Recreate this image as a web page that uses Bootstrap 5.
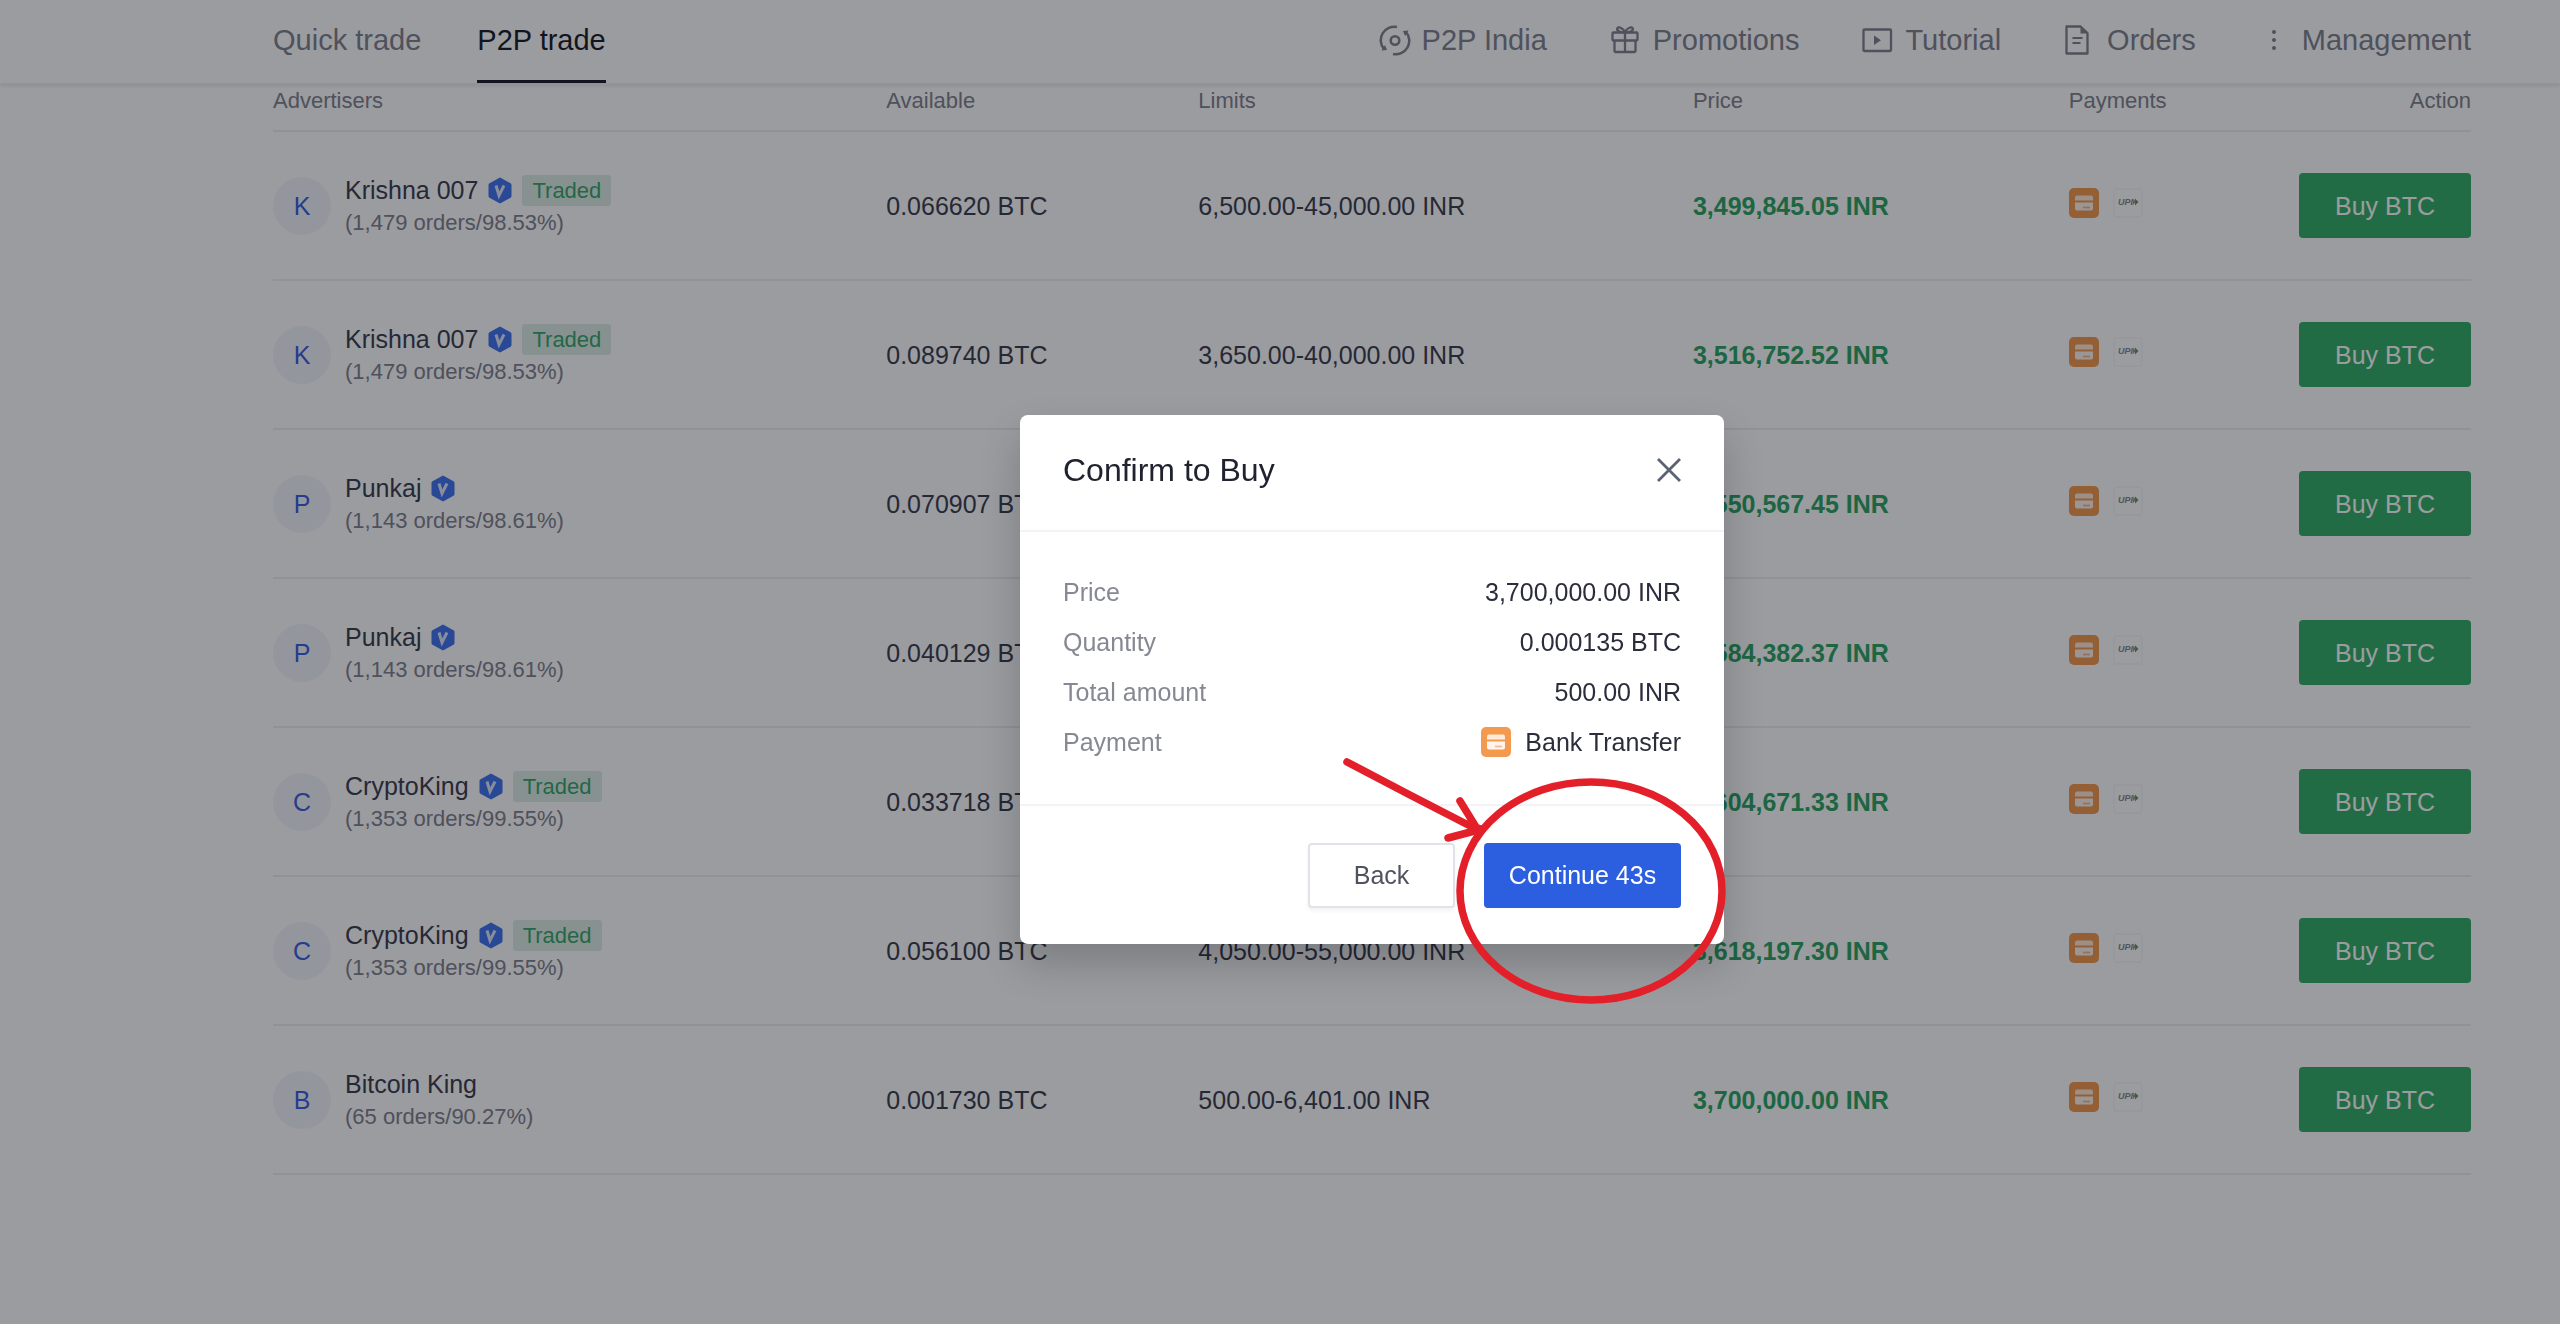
<!DOCTYPE html>
<html lang="en">
<head>
<meta charset="utf-8">
<meta name="viewport" content="width=device-width, initial-scale=1">
<title>P2P trade</title>
<link href="https://cdn.jsdelivr.net/npm/bootstrap@5.3.0/dist/css/bootstrap.min.css" rel="stylesheet">
<style>
:root{--ink:#3c3e50;--muted:#80828f;--green:#2fa565;--line:#edeef1;--edge-l:273px;--edge-r:89px}
body{font-family:"Liberation Sans",Arial,sans-serif;font-size:25px;line-height:34px;color:var(--ink);background:#fff;min-height:100vh;overflow:hidden}
a{text-decoration:none;color:inherit}
.edges{padding-left:var(--edge-l);padding-right:var(--edge-r)}
.topbar{height:83px;font-size:29px;color:var(--muted);background:#fff;box-shadow:0 4px 2px rgba(10,15,40,.06)}
.tabs{gap:56px}
.tabs a{padding:23px 0;border-bottom:3px solid transparent}
.tabs a.current{color:#1c1f2c;border-bottom-color:#1c1f2c}
.tools{gap:63px;padding-bottom:3px}
.tools a{gap:11px}
.tools svg{width:32px;height:32px}
.offers{table-layout:fixed;width:100%}
.offers th{height:48px;padding:0 0 16px;font-size:22px;line-height:26px;font-weight:400;color:var(--muted);vertical-align:bottom;border-bottom:2px solid var(--line)}
.offers td{height:149px;padding:0;vertical-align:middle;border-bottom:2px solid var(--line)}
.w-adv{width:27.9%}.w-avl{width:14.2%}.w-lim{width:22.5%}.w-prc{width:17.1%}
.who{gap:14px}
.face{width:58px;height:58px;border-radius:50%;background:#f4f6fe;color:#3c5fe0}
.nick{gap:10px}
.vip{width:24px;height:27px}
.tag-traded{font-size:22px;line-height:31px;padding:0 10px;border-radius:3px;color:#3aa76d;background:#deefe6}
.stats{font-size:22px;line-height:31px;color:var(--muted)}
.cost{font-weight:700;color:var(--green)}
.pays{gap:14px;padding-bottom:5px}
.pays svg,.bank{width:30px;height:30px}
.btn{--bs-btn-font-size:25px;--bs-btn-line-height:34px;--bs-btn-border-radius:4px;height:65px;padding:0}
.btn-buy{--bs-btn-color:#fff;--bs-btn-bg:#35b069;--bs-btn-hover-color:#fff;--bs-btn-hover-bg:#2c9c5b;--bs-btn-border-width:0;width:172px}
.confirm-layer{background:rgba(5,8,15,.4);padding:34px var(--edge-r) 0 var(--edge-l)}
.confirm-box{width:704px;position:relative;color:#2b2d3c}
.confirm-box .modal-content{border:0;border-radius:8px;color:inherit;box-shadow:0 20px 40px rgba(0,0,0,.2)}
.confirm-box .modal-header{height:117px;padding:0 42px 4px 43px;border-bottom:2px solid #f2f3f6}
.confirm-box .modal-title{font-size:32px;line-height:40px;font-weight:400;color:#20222f}
.confirm-box .modal-body{padding:35px 43px 37px;line-height:50px}
.confirm-box .modal-footer{padding:37px 43px 36px;gap:29px;border-top:2px solid #f2f3f6}
.confirm-box .modal-footer>*{margin:0}
.confirm-box dt{font-weight:400;color:#868893}
.close-x{width:26px;height:26px;border:0;background:none}
.bank-line{gap:14px}
.btn-back{--bs-btn-color:#50525f;--bs-btn-bg:#fff;--bs-btn-border-color:#e2e3e8;--bs-btn-border-width:2px;width:147px;box-shadow:0 3px 4px rgba(0,0,0,.05)}
.btn-go{--bs-btn-color:#fff;--bs-btn-bg:#2c5fe0;--bs-btn-border-width:0;width:197px}
.callout-ink{position:absolute;left:310px;top:330px;width:420px;height:270px;pointer-events:none}
</style>
</head>
<body>
<svg class="d-none" aria-hidden="true">
  <symbol id="i-vip" viewBox="0 0 24 27"><path d="M12 0.5 22.5 6.2Q23.5 6.8 23.5 8v11q0 1.200-1 1.800L12 26.500 1.500 20.800Q.5 20.200.5 19V8q0-1.200 1-1.800Z" fill="#4273f0"/><path d="m8 8.500 3 10 5-10" fill="none" stroke="#dfe6fb" stroke-width="3"/></symbol>
  <symbol id="i-bank" viewBox="0 0 30 30"><rect width="30" height="30" rx="5" fill="#f39a4f"/><path d="M6 9.500Q6 7.500 8 7.500h14q2 0 2 2V12.500H6Z" fill="#ffe9d8"/><path d="M6 14.500h18v6q0 2-2 2H8q-2 0-2-2Z" fill="#fff5ec"/><path d="M14 19.500h7" stroke="#f6b685" stroke-width="1.600"/></symbol>
  <symbol id="i-upi" viewBox="0 0 30 30"><rect x="1" y="1" width="28" height="28" rx="3" fill="#fff" stroke="#f6f7f8" stroke-width="1.500"/><text x="5" y="17" font-family="Liberation Sans" font-size="9" font-weight="700" font-style="italic" fill="#85878d">UPI</text><path d="m22 10.500 3.500 3.500-3.500 3.500Z" fill="#5c9a6c"/><path d="m20.500 10.500 2.200 3.500-3 3.500Z" fill="#b99458"/></symbol>
</svg>

<header class="topbar edges d-flex justify-content-between position-relative">
  <nav class="tabs d-flex"><a href="#">Quick trade</a><a href="#" class="current" aria-current="page">P2P trade</a></nav>
  <nav class="tools d-flex align-items-center">
    <a href="#" class="d-flex align-items-center"><svg viewBox="0 0 32 32" fill="none" stroke="currentColor" stroke-width="2.500"><circle cx="16" cy="16.500" r="4.300"/><path d="M18 3A13.500 13.500 0 0 0 5 25M14 30A13.500 13.500 0 0 0 27 8"/><path d="m2.500 26.500 5.500-.5-2-5ZM29.500 6.500l-5.500.5 2 5Z" fill="currentColor" stroke="none"/></svg>P2P India</a>
    <a href="#" class="d-flex align-items-center"><svg viewBox="0 0 32 32" fill="none" stroke="currentColor" stroke-width="2.300"><rect x="2.500" y="8.500" width="25" height="8" rx="1"/><path d="M4.500 16.500V27q0 1 1 1h19q1 0 1-1V16.500M15 8.500V28M15 8.500C11 8.500 6.500 7 7.200 4.500 8 2 13 3.500 15 8.500c2-5 7-6.500 7.800-4C23.500 7 19 8.500 15 8.500Z"/></svg>Promotions</a>
    <a href="#" class="d-flex align-items-center"><svg viewBox="0 0 32 32" fill="none" stroke="currentColor" stroke-width="2.300"><rect x="1.500" y="5.500" width="27.500" height="21.500" rx="1"/><path d="M12 11.500 19 16.200l-7 4.700Z" fill="currentColor" stroke="none"/></svg>Tutorial</a>
    <a href="#" class="d-flex align-items-center"><svg viewBox="0 0 32 32" fill="none" stroke="currentColor" stroke-width="2.300"><path d="M2.500 2.500h14L23.500 9v20.500h-21Z" stroke-linejoin="round"/><path d="M16.500 3 23 9.500h-6.500Z" fill="currentColor" stroke="none"/><path d="M8.500 14h10M8.500 19h8" stroke-width="2"/></svg>Orders</a>
    <a href="#" class="d-flex align-items-center"><svg viewBox="0 0 32 32" fill="currentColor"><circle cx="15" cy="8" r="2"/><circle cx="15" cy="16" r="2"/><circle cx="15" cy="24" r="2"/></svg>Management</a>
  </nav>
</header>

<main class="edges">
<table class="offers">
  <thead><tr><th class="w-adv">Advertisers</th><th class="w-avl">Available</th><th class="w-lim">Limits</th><th class="w-prc">Price</th><th>Payments</th><th class="text-end">Action</th></tr></thead>
  <tbody>
  <tr>
    <td><div class="who d-flex align-items-center"><span class="face d-flex align-items-center justify-content-center">K</span><div><div class="nick d-flex align-items-center"><a href="#">Krishna 007</a><svg class="vip"><use href="#i-vip"/></svg><span class="tag-traded">Traded</span></div><div class="stats">(1,479 orders/98.53%)</div></div></div></td>
    <td>0.066620 BTC</td><td>6,500.00-45,000.00 INR</td><td class="cost">3,499,845.05 INR</td>
    <td><div class="pays d-flex"><svg><use href="#i-bank"/></svg><svg><use href="#i-upi"/></svg></div></td>
    <td class="text-end"><button type="button" class="btn btn-buy">Buy BTC</button></td>
  </tr>
  <tr>
    <td><div class="who d-flex align-items-center"><span class="face d-flex align-items-center justify-content-center">K</span><div><div class="nick d-flex align-items-center"><a href="#">Krishna 007</a><svg class="vip"><use href="#i-vip"/></svg><span class="tag-traded">Traded</span></div><div class="stats">(1,479 orders/98.53%)</div></div></div></td>
    <td>0.089740 BTC</td><td>3,650.00-40,000.00 INR</td><td class="cost">3,516,752.52 INR</td>
    <td><div class="pays d-flex"><svg><use href="#i-bank"/></svg><svg><use href="#i-upi"/></svg></div></td>
    <td class="text-end"><button type="button" class="btn btn-buy">Buy BTC</button></td>
  </tr>
  <tr>
    <td><div class="who d-flex align-items-center"><span class="face d-flex align-items-center justify-content-center">P</span><div><div class="nick d-flex align-items-center"><a href="#">Punkaj</a><svg class="vip"><use href="#i-vip"/></svg></div><div class="stats">(1,143 orders/98.61%)</div></div></div></td>
    <td>0.070907 BTC</td><td></td><td class="cost">3,550,567.45 INR</td>
    <td><div class="pays d-flex"><svg><use href="#i-bank"/></svg><svg><use href="#i-upi"/></svg></div></td>
    <td class="text-end"><button type="button" class="btn btn-buy">Buy BTC</button></td>
  </tr>
  <tr>
    <td><div class="who d-flex align-items-center"><span class="face d-flex align-items-center justify-content-center">P</span><div><div class="nick d-flex align-items-center"><a href="#">Punkaj</a><svg class="vip"><use href="#i-vip"/></svg></div><div class="stats">(1,143 orders/98.61%)</div></div></div></td>
    <td>0.040129 BTC</td><td></td><td class="cost">3,584,382.37 INR</td>
    <td><div class="pays d-flex"><svg><use href="#i-bank"/></svg><svg><use href="#i-upi"/></svg></div></td>
    <td class="text-end"><button type="button" class="btn btn-buy">Buy BTC</button></td>
  </tr>
  <tr>
    <td><div class="who d-flex align-items-center"><span class="face d-flex align-items-center justify-content-center">C</span><div><div class="nick d-flex align-items-center"><a href="#">CryptoKing</a><svg class="vip"><use href="#i-vip"/></svg><span class="tag-traded">Traded</span></div><div class="stats">(1,353 orders/99.55%)</div></div></div></td>
    <td>0.033718 BTC</td><td></td><td class="cost">3,604,671.33 INR</td>
    <td><div class="pays d-flex"><svg><use href="#i-bank"/></svg><svg><use href="#i-upi"/></svg></div></td>
    <td class="text-end"><button type="button" class="btn btn-buy">Buy BTC</button></td>
  </tr>
  <tr>
    <td><div class="who d-flex align-items-center"><span class="face d-flex align-items-center justify-content-center">C</span><div><div class="nick d-flex align-items-center"><a href="#">CryptoKing</a><svg class="vip"><use href="#i-vip"/></svg><span class="tag-traded">Traded</span></div><div class="stats">(1,353 orders/99.55%)</div></div></div></td>
    <td>0.056100 BTC</td><td>4,050.00-55,000.00 INR</td><td class="cost">3,618,197.30 INR</td>
    <td><div class="pays d-flex"><svg><use href="#i-bank"/></svg><svg><use href="#i-upi"/></svg></div></td>
    <td class="text-end"><button type="button" class="btn btn-buy">Buy BTC</button></td>
  </tr>
  <tr>
    <td><div class="who d-flex align-items-center"><span class="face d-flex align-items-center justify-content-center">B</span><div><div class="nick d-flex align-items-center"><a href="#">Bitcoin King</a></div><div class="stats">(65 orders/90.27%)</div></div></div></td>
    <td>0.001730 BTC</td><td>500.00-6,401.00 INR</td><td class="cost">3,700,000.00 INR</td>
    <td><div class="pays d-flex"><svg><use href="#i-bank"/></svg><svg><use href="#i-upi"/></svg></div></td>
    <td class="text-end"><button type="button" class="btn btn-buy">Buy BTC</button></td>
  </tr>
  </tbody>
</table>
</main>

<div class="modal confirm-layer d-flex align-items-center justify-content-center" role="dialog" aria-modal="true" aria-labelledby="confirm-title">
  <div class="confirm-box">
    <div class="modal-content">
      <div class="modal-header">
        <h1 class="modal-title" id="confirm-title">Confirm to Buy</h1>
        <button type="button" class="close-x p-0 d-flex" aria-label="Close"><svg viewBox="0 0 26 26" width="26" height="26" fill="none" stroke="#5b6274" stroke-width="2.800"><path d="m2 2 22 22M24 2 2 24"/></svg></button>
      </div>
      <dl class="modal-body m-0">
        <div class="d-flex justify-content-between"><dt>Price</dt><dd class="m-0">3,700,000.00 INR</dd></div>
        <div class="d-flex justify-content-between"><dt>Quantity</dt><dd class="m-0">0.000135 BTC</dd></div>
        <div class="d-flex justify-content-between"><dt>Total amount</dt><dd class="m-0">500.00 INR</dd></div>
        <div class="d-flex justify-content-between"><dt>Payment</dt><dd class="bank-line d-flex align-items-center m-0"><svg class="bank"><use href="#i-bank"/></svg>Bank Transfer</dd></div>
      </dl>
      <div class="modal-footer">
        <button type="button" class="btn btn-back">Back</button>
        <button type="button" class="btn btn-go">Continue 43s</button>
      </div>
    </div>
    <svg class="callout-ink" viewBox="0 0 420 270" fill="none" stroke="#e3202a" stroke-width="7.500" stroke-linecap="round" stroke-linejoin="round" aria-hidden="true">
      <ellipse cx="261" cy="146" rx="131" ry="109"/>
      <path d="M17 17 80 50l66 34M130 56l16 26 6 3M118 93l34-9"/>
    </svg>
  </div>
</div>
<script src="https://cdn.jsdelivr.net/npm/bootstrap@5.3.0/dist/js/bootstrap.bundle.min.js"></script>
</body>
</html>
